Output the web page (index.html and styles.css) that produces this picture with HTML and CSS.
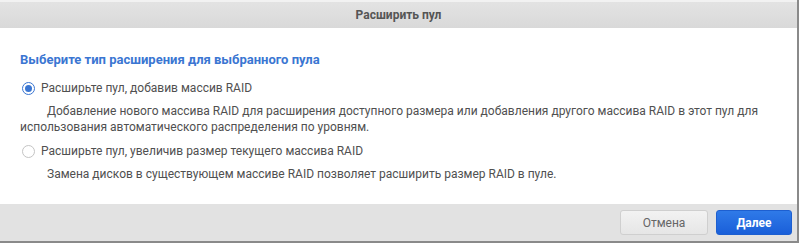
FILE: index.html
```html
<!DOCTYPE html>
<html lang="ru">
<head>
    <meta charset="UTF-8">
    <title>Расширить пул</title>
    <link rel="stylesheet" href="styles.css">
</head>
<body>

<div class="dialog">
    <div class="dialog-header">Расширить пул</div>

    <div class="dialog-body">
        <h2 class="section-title">Выберите тип расширения для выбранного пула</h2>

        <label class="option">
            <input type="radio" name="expandType" checked>
            <span class="radio"></span>
            Расширьте пул, добавив массив RAID
        </label>
        <p class="option-desc">Добавление нового массива RAID для расширения доступного размера или добавления другого массива RAID в этот пул для использования автоматического распределения по уровням.</p>

        <label class="option">
            <input type="radio" name="expandType">
            <span class="radio"></span>
            Расширьте пул, увеличив размер текущего массива RAID
        </label>
        <p class="option-desc">Замена дисков в существующем массиве RAID позволяет расширить размер RAID в пуле.</p>
    </div>

    <div class="dialog-footer">
        <button class="btn btn-cancel">Отмена</button>
        <button class="btn btn-primary">Далее</button>
    </div>
</div>

</body>
</html>
```

FILE: styles.css
```css
html, body { margin: 0; padding: 0; background: #fff; }
body { font-family: Roboto, "Liberation Sans", sans-serif; font-size: 12px; color: #505050; }

.dialog {
    width: 797px;
    height: 241px;
    border-right: 2px solid #8a8a8a;
    border-bottom: 2px solid #8a8a8a;
    display: flex;
    flex-direction: column;
    box-sizing: content-box;
}
.dialog-header {
    height: 26px;
    border-top: 2px solid #f2f2f2;
    background: linear-gradient(#e3e3e3, #d9d9d9);
    text-align: center;
    line-height: 26px;
    font-weight: bold;
    font-size: 12px;
    color: #555;
}
.dialog-body {
    flex: 1;
    padding: 23px 20px 0 20px;
}
.section-title {
    margin: 0 0 11px 0;
    font-size: 13px;
    font-weight: bold;
    color: #3a76d2;
    line-height: 17px;
}
.option {
    display: flex;
    align-items: center;
    height: 18px;
    color: #505050;
    font-size: 12px;
}
.option input { display: none; }
.radio {
    width: 13px;
    height: 13px;
    border: 1px solid #c4c4c4;
    border-radius: 50%;
    margin: 0 6px 0 2px;
    box-sizing: border-box;
    position: relative;
    background: #fff;
}
.option input:checked + .radio {
    border-color: #3a76d2;
}
.option input:checked + .radio::after {
    content: "";
    position: absolute;
    left: 2px;
    top: 2px;
    width: 7px;
    height: 7px;
    border-radius: 50%;
    background: #3a76d2;
}
.option-desc {
    margin: 6px 0 7px 0;
    text-indent: 27px;
    line-height: 16px;
    font-size: 12px;
    color: #505050;
}
.dialog-footer {
    height: 37px;
    background: #e2e2e2;
    display: flex;
    justify-content: flex-end;
    align-items: center;
    gap: 8px;
    padding-right: 5px;
}
.btn {
    height: 25px;
    border-radius: 3px;
    font-family: Roboto, "Liberation Sans", sans-serif;
    font-size: 12px;
    padding: 0;
}
.btn-cancel {
    width: 88px;
    border: 1px solid #cfcfcf;
    background: linear-gradient(#f2f2f2, #e6e6e6);
    color: #666;
}
.btn-primary {
    width: 76px;
    border: 1px solid #1d5fd0;
    background: linear-gradient(#2f7ae8, #1a5fd9);
    color: #fff;
    font-weight: bold;
}
```
